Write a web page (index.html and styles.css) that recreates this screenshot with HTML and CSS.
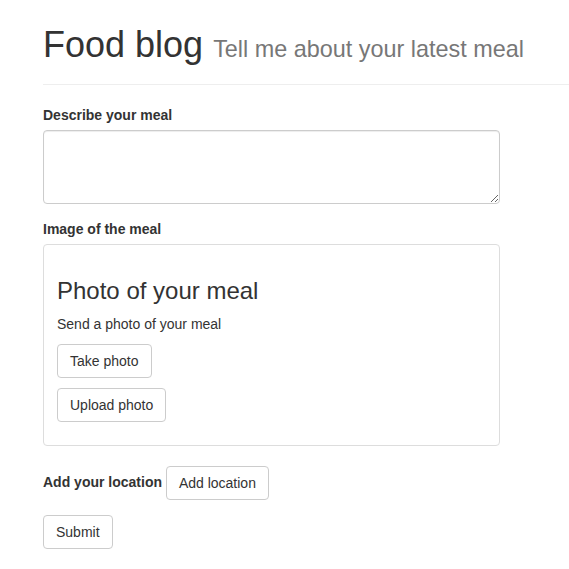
FILE: index.html
```html
<!DOCTYPE html>
<html>
<head>
<meta charset="utf-8">
<title>Food blog</title>
<link rel="stylesheet" href="styles.css">
</head>
<body>
<div class="page">
  <div class="page-header">
    <h1>Food blog <small>Tell me about your latest meal</small></h1>
  </div>
  <form class="form">
    <div class="form-group">
      <label class="label" for="desc">Describe your meal</label>
      <textarea id="desc" class="textarea" rows="3"></textarea>
    </div>
    <div class="form-group card-group">
      <label class="label">Image of the meal</label>
      <div class="card">
        <h3 class="card-title">Photo of your meal</h3>
        <p class="card-text">Send a photo of your meal</p>
        <div class="btn-row"><button type="button" class="btn">Take photo</button></div>
        <div class="btn-row"><button type="button" class="btn">Upload photo</button></div>
      </div>
    </div>
    <div class="form-group">
      <label class="label inline">Add your location</label> <button type="button" class="btn">Add location</button>
    </div>
    <div class="form-group">
      <button type="submit" class="btn">Submit</button>
    </div>
  </form>
</div>
</body>
</html>
```

FILE: styles.css
```css
* { box-sizing: border-box; }
html, body { margin: 0; padding: 0; }
body {
  font-family: "Liberation Sans", Arial, Helvetica, sans-serif;
  font-size: 14px;
  line-height: 1.42857143;
  color: #333;
  background: #fff;
}
.page {
  padding-left: 43px;
}
.page-header {
  padding-bottom: 9px;
  margin: 0 0 20px;
  border-bottom: 1px solid #eee;
}
.page-header h1 {
  margin: 25px 0 10px;
  font-size: 36px;
  font-weight: 500;
  line-height: 1.1;
  color: #333;
}
.page-header h1 small {
  font-size: 65%;
  font-weight: 400;
  line-height: 1;
  color: #777;
}
.form {
  width: 457px;
}
.form-group {
  margin-bottom: 15px;
}
.card-group {
  margin-bottom: 20px;
}
.label {
  display: inline-block;
  max-width: 100%;
  margin-bottom: 5px;
  font-weight: 700;
}
.label.inline { margin-bottom: 0; }
.textarea {
  display: block;
  width: 100%;
  height: 74px;
  padding: 6px 12px;
  font-family: inherit;
  font-size: 14px;
  line-height: 1.42857143;
  color: #555;
  background: #fff;
  border: 1px solid #ccc;
  border-radius: 4px;
  box-shadow: inset 0 1px 1px rgba(0,0,0,.075);
  resize: vertical;
}
.card {
  border: 1px solid #ddd;
  border-radius: 4px;
  padding: 13px;
}
.card-title {
  margin: 20px 0 10px;
  font-size: 24px;
  font-weight: 500;
  line-height: 1.1;
}
.card-text {
  margin: 0 0 10px;
}
.btn-row {
  margin-bottom: 10px;
}
.btn {
  display: inline-block;
  padding: 6px 12px;
  margin: 0;
  font-family: inherit;
  font-size: 14px;
  font-weight: 400;
  line-height: 1.42857143;
  color: #333;
  background: #fff;
  border: 1px solid #ccc;
  border-radius: 4px;
  vertical-align: middle;
  cursor: pointer;
}
```
